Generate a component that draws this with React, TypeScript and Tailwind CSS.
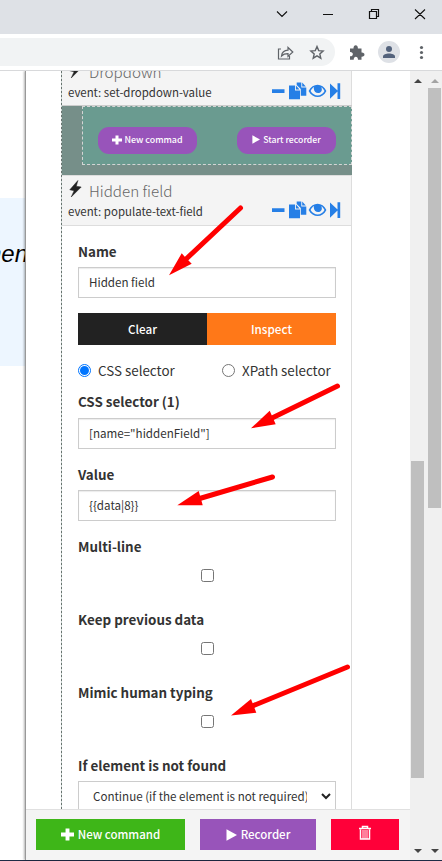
import React from 'react';

const Plus = ({ className }: { className: string }) => (
  <svg viewBox="0 0 12 12" className={className} fill="currentColor"><path d="M4.2 0.5h3.6v3.7H12v3.6H7.8v3.7H4.2V7.8H0V4.2h4.2z" /></svg>
);
const Play = ({ className }: { className: string }) => (
  <svg viewBox="0 0 11 12" className={className} fill="currentColor"><path d="M0.5 0.3L11 6 0.5 11.7z" /></svg>
);
const Bolt = () => (
  <svg viewBox="0 0 14 18" className="h-[18px] w-[14px] shrink-0 text-[#222]" fill="currentColor"><path d="M9.900 0.500L1.800 9.800l4.300.9-2.900 6.300L13.200 7 8.300 6.200z" stroke="currentColor" strokeWidth=".5" /></svg>
);

function Actions() {
  return (
    <svg viewBox="0 0 70 18" className="h-[18px] w-[70px] shrink-0" fill="#267fe6">
      <path d="M1 7.300h12.500v3.600H1zM18 3.400h6v5h5v8.800H18zM24.900 3.400l3.600 4h-3.600zM25.700.5h4.600v5h5v8.200h-5.500V7.100L25.700 3zM31.200.5l3.600 4h-3.600z" />
      <path fillRule="evenodd" d="M37.600 9C41.800.8 51.500.8 55.400 9c-3.900 8.100-13.600 8.100-17.800 0zm2 0c3.200 5.900 10.900 5.900 13.900 0-1-2-2-3.100-3.200-3.800 3 6.600-7.300 8.300-7.500 1.200 0-.5.100-1 .2-1.400C41.500 6 40.400 7.200 39.600 9z" />
      <path d="M46.500 4.300c-2 .2-2.700 1.500-2.500 3.100h1.400c0-1.100.4-1.700 1.500-1.900zM59 1.500l7.500 7V1.300h2.700v15.600h-2.700V9.500L59 16.800z" />
    </svg>
  );
}

function HeaderRow({ title, event }: { title: string; event: string }) {
  return (
    <header className="flex h-[49px] flex-col bg-[#f4f4f4] pl-[6px]">
      <div className="flex h-[25px] items-center gap-[7px] pt-[3px]">
        <div className="pb-[2px]"><Bolt /></div>
        <h2 className="text-[15.2px] leading-5 font-light whitespace-nowrap text-[#666]">{title}</h2>
      </div>
      <div className="flex h-[20px] items-center justify-between pr-[10px]">
        <span className="text-[11.45px] leading-5 whitespace-nowrap">{event}</span>
        <div className="pb-[3px]"><Actions /></div>
      </div>
    </header>
  );
}

const Label = ({ children }: { children: React.ReactNode }) => (
  <div className="flex h-[30px] items-center pb-[2px] text-[13.4px] font-bold whitespace-nowrap">{children}</div>
);
const Field = ({ value }: { value: string }) => (
  <div className="flex h-[31px] items-center border border-[#ccc] bg-white pl-[10px] text-[11.6px] whitespace-nowrap shadow-[inset_0_1px_1px_rgba(0,0,0,0.08)]">{value}</div>
);
const Check = () => (
  <div className="flex h-[43px] justify-center pt-[7px]"><span className="size-[13px] rounded-[2.5px] border border-[#767676] bg-white" /></div>
);

function Chrome() {
  return (
    <>
      <div className="h-[34px] bg-[#dee1e6]">
        <svg viewBox="0 0 442 34" className="h-[34px] w-[442px]" fill="none" stroke="#111">
          <path d="M277 11.500l5 5 5-5M323 14.500h10M415 9.500l10 9.500M425 9.500L415 19" strokeWidth="1.100" />
          <path d="M369.500 11.500h7v7h-7zM371.500 11V9.500h7v7H377" strokeWidth="1.200" />
        </svg>
      </div>
      <div className="relative h-[37px] border-b border-[#d8d9db] bg-white pt-[4px]">
        <div className="h-[28px] w-[335px] rounded-r-full bg-[#f1f3f4]" />
        <svg viewBox="0 34 442 36" className="absolute top-0 left-0 h-[36px] w-[442px]" fill="none" stroke="#5f6368">
          <path d="M281 49h-2.500v10h11v-3" strokeWidth="1.200" />
          <path d="M281.500 56c.5-4 3-5.700 6.500-5.800V47.500l4.800 4.500-4.800 4.400V53.700c-3 0-4.800.5-6.500 2.300z" strokeWidth="1.200" />
          <path d="M317 46.600l1.700 4 4.400.4-3.300 2.900 1 4.300-3.800-2.300-3.800 2.300 1-4.300-3.300-2.900 4.400-.4z" strokeWidth="1.400" />
          <path d="M350 48.500h3.500c-.3-4.500 4.700-4.500 4.400 0h3.600v4c4-.3 4 4.500 0 4.200v3H358c.2-4-4.500-4-4.300 0H350v-3.400c3.800.2 3.800-4.500 0-4.300z" fill="#5f6368" stroke="none" />
          <circle cx="389" cy="52" r="11" fill="#dee1e6" stroke="none" />
          <g fill="#53627c" stroke="none"><circle cx="389" cy="49" r="3" /><path d="M383 58v-1.500c0-4 12-4 12 0V58z" /></g>
          <g fill="#5f6368" stroke="none"><circle cx="421.500" cy="47.500" r="1.600" /><circle cx="421.500" cy="52.500" r="1.600" /><circle cx="421.500" cy="57.500" r="1.600" /></g>
        </svg>
      </div>
    </>
  );
}

const Arrow = ({ d, head }: { d: string; head: string }) => (
  <g><path d={d} stroke="#f00" strokeWidth="5" strokeLinecap="round" /><path d={head} fill="#f00" /></g>
);

export default function App() {
  return (
    <div className="relative h-[861px] w-[442px] overflow-hidden bg-white font-['Noto_Sans_CJK_JP',sans-serif] text-[#333]">
      <Chrome />
      <main className="flex h-[789px]">
        <aside className="w-[25px] shrink-0 overflow-hidden pt-[127px]">
          <div className="flex h-[168px] justify-end bg-[#edf6ff] pt-[42px] font-['Liberation_Sans',sans-serif] text-[24px] leading-7 text-black italic"><span className="-mr-[3px]">nen</span></div>
        </aside>
        <section className="flex w-[385px] shrink-0 flex-col border-l border-[#999] bg-white shadow-[-1px_0_2px_rgba(0,0,0,0.3)]">
          <div className="h-[738px] overflow-hidden pl-[35px]">
            <div className="flex w-[291px]">
              <div className="w-px shrink-0 bg-[repeating-linear-gradient(to_bottom,#68736f_0_2px,#cdd7d4_2px_4px)]" />
              <div className="w-[290px] shrink-0">
                <div className="h-[34px] overflow-hidden border-r border-[#ddd] bg-[#f4f4f4]"><div className="-mt-[14px]"><HeaderRow title="Dropdown" event="event: set-dropdown-value" /></div></div>
                <div className="flex h-[70px] border-t border-[#ccc] bg-[#768f89] pl-[20px]">
                  <div className="flex h-[59px] w-[270px] items-center justify-between border border-dashed border-[#d5d5d5] bg-[#6a9b90] pt-[9px] pr-[15px] pl-[15px]">
                    <button className="flex h-[27px] w-[99px] items-center justify-center gap-[2px] rounded-[11px] bg-[#9854ba] pb-px text-[8.9px] font-medium whitespace-nowrap text-white"><Plus className="size-[10px]" />New commad</button>
                    <button className="flex h-[27px] w-[99px] items-center justify-center gap-[3px] rounded-[11px] bg-[#9854ba] pb-px text-[8.7px] font-medium whitespace-nowrap text-white"><Play className="h-[9px] w-[8px]" />Start recorder</button>
                  </div>
                </div>
                <div className="h-[700px] border-t border-r border-[#ddd]">
                  <HeaderRow title="Hidden field" event="event: populate-text-field" />
                  <div className="border-t border-[#ddd] px-[15px] pt-[11px] pl-[16px]">
                    <Label>Name</Label>
                    <Field value="Hidden field" />
                    <div className="mt-[15px] flex h-[32px] text-[11.7px] font-medium text-white">
                      <button className="w-1/2 bg-[#222] pb-px">Clear</button>
                      <button className="w-1/2 bg-[#ff7818] pb-px">Inspect</button>
                    </div>
                    <div className="flex h-[42px] items-center pt-[9px] text-[13.4px] whitespace-nowrap">
                      <span className="mr-[7px] flex size-[13px] items-center justify-center rounded-full border border-[#0075ff]"><span className="size-[9px] rounded-full bg-[#0075ff]" /></span>
                      <span className="w-[124px]">CSS selector</span>
                      <span className="mr-[7px] size-[13px] shrink-0 rounded-full border border-[#767676]" />
                      <span>XPath selector</span>
                    </div>
                    <Label>CSS selector (1)</Label>
                    <div className="mt-px"><Field value={'[name="hiddenField"]'} /></div>
                    <div className="pt-[11px]"><Label>Value</Label></div>
                    <Field value="{{data|8}}" />
                    <div className="pt-[11px]"><Label>Multi-line</Label></div>
                    <Check />
                    <Label>Keep previous data</Label>
                    <Check />
                    <Label>Mimic human typing</Label>
                    <Check />
                    <Label>If element is not found</Label>
                    <div className="flex h-[31px] items-center border border-[#ccc] pl-[14px] text-[11.6px]">
                      <span className="w-[214px] shrink-0 overflow-hidden whitespace-nowrap">Continue (if the element is not required)</span>
                      <svg viewBox="0 0 10 7" className="ml-[14px] h-[7px] w-[10px] shrink-0" fill="none" stroke="#222" strokeWidth="2"><path d="M1 1l4 4 4-4" /></svg>
                    </div>
                  </div>
                </div>
              </div>
            </div>
          </div>
          <footer className="flex h-[51px] shrink-0 items-start gap-[15px] border-t border-[#e0e0e0] bg-[#f4f4f4] pt-[9px] pl-[10px] text-[11.5px] font-medium whitespace-nowrap text-white">
            <button className="flex h-[31px] w-[149px] items-center justify-center gap-[4px] bg-[#3eb618]"><Plus className="size-[13px]" />New command</button>
            <button className="flex h-[31px] w-[116px] items-center justify-center gap-[4px] bg-[#9854ba]"><Play className="h-[12px] w-[11px]" />Recorder</button>
            <button className="flex h-[31px] w-[68px] items-center justify-center bg-[#ff0039] pb-[3px]">
              <svg viewBox="0 0 14 16" className="h-[16px] w-[14px]" fill="none" stroke="#fff"><path d="M1 3.500h12M4.500 3V1.500h5V3M2.500 4.500v9.500h9V4.500" strokeWidth="1.500" /><path d="M5 5v9M7 5v9M9 5v9" /></svg>
            </button>
          </footer>
        </section>
        <div className="w-[18px] shrink-0 bg-[#f0f0f0] pt-[8px] pl-px">
          <svg viewBox="0 0 8 4" className="ml-[3px] h-[4px] w-[8px]" fill="#444"><path d="M0 4l4-4 4 4z" /></svg>
          <div className="mt-[378px] h-[317px] w-[13px] bg-[#bfbfbf]" />
          <svg viewBox="0 0 8 4" className="mt-[71px] ml-[3px] h-[4px] w-[8px]" fill="#444"><path d="M0 0h8L4 4z" /></svg>
        </div>
        <div className="w-[14px] shrink-0 bg-[#f0f0f0] pt-[8px]">
          <svg viewBox="0 0 8 4" className="ml-[3px] h-[4px] w-[8px]" fill="#a3a3a3"><path d="M0 4l4-4 4 4z" /></svg>
          <div className="mt-[5px] h-[420px] w-[13px] bg-[#bfbfbf]" />
          <svg viewBox="0 0 8 4" className="mt-[341px] ml-[3px] h-[4px] w-[8px]" fill="#444"><path d="M0 0h8L4 4z" /></svg>
        </div>
      </main>
      <div className="h-px bg-[#1e2c46]" />
      <svg viewBox="0 0 442 861" className="pointer-events-none absolute inset-0 h-[861px] w-[442px]" fill="none">
        <Arrow d="M240.500 208L184 261" head="M169 275.300L181.700 253.300 185 257 189 261 191.700 263.700z" />
        <Arrow d="M337.500 386L270 419" head="M251 428.300L269.700 410.700 275.700 424.300z" />
        <Arrow d="M272.500 477L198 499" head="M177.300 505.300L198.700 491 202.700 505.300z" />
        <Arrow d="M347.500 667L250 707" head="M231 715.500L251 699 256.300 712.700z" />
      </svg>
    </div>
  );
}
